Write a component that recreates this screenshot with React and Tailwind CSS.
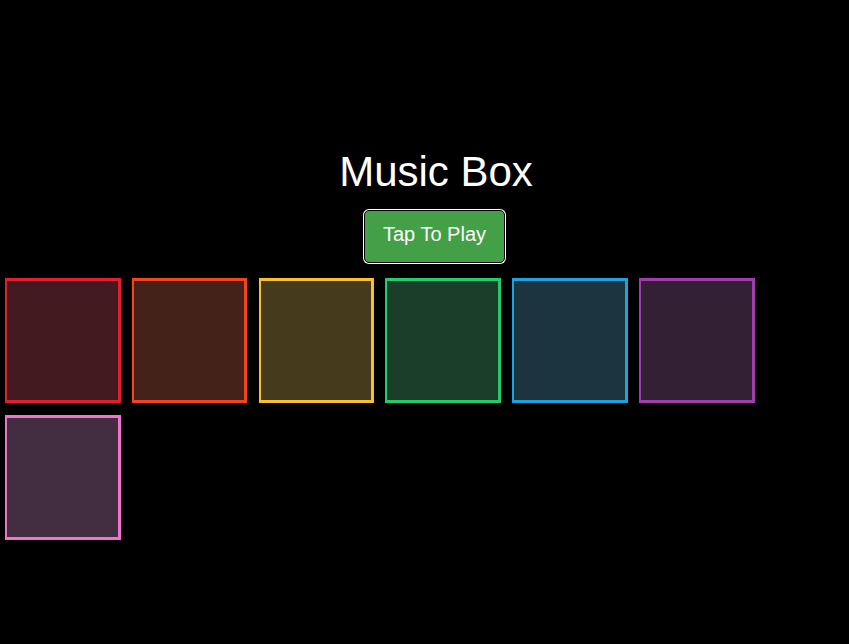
import React from 'react';

const pads = [
  { id: 'red', cls: 'border-[#e11f2f] bg-[#421a1f]' },
  { id: 'orange', cls: 'border-[#f4441d] bg-[#44221a]' },
  { id: 'yellow', cls: 'border-[#fbbf2d] bg-[#463a1d]' },
  { id: 'green', cls: 'border-[#22cc6a] bg-[#1a3e2a]' },
  { id: 'blue', cls: 'border-[#1ca2de] bg-[#1b3440]' },
  { id: 'purple', cls: 'border-[#a23cae] bg-[#332034]' },
  { id: 'pink', cls: 'border-[#f074c9] bg-[#432d40]' },
];

export default function App() {
  return (
    <div className="min-h-[644px] w-full bg-black font-['Liberation_Sans',Arial,sans-serif] text-white">
      <div className="flex flex-col items-center pl-[20px] pt-[148px]">
        <h1 className="pl-[3px] text-[42px] leading-[48px] font-normal">Music Box</h1>
        <button
          type="button"
          className="mt-[14px] h-[53px] w-[141px] rounded-[5px] border border-black bg-[#43a047] pt-[12px] pb-[16px] text-[20px] leading-[23px] text-white ring-1 ring-white"
        >
          Tap To Play
        </button>
      </div>

      <div className="mt-[15px] flex flex-wrap gap-x-[11.2px] gap-y-[12px] px-[5px]">
        {pads.map((p) => (
          <div
            key={p.id}
            className={`h-[125px] w-[115.6px] border-2 border-t-[3px] border-r-[3px] border-b-[3px] ${p.cls}`}
          />
        ))}
      </div>
    </div>
  );
}
